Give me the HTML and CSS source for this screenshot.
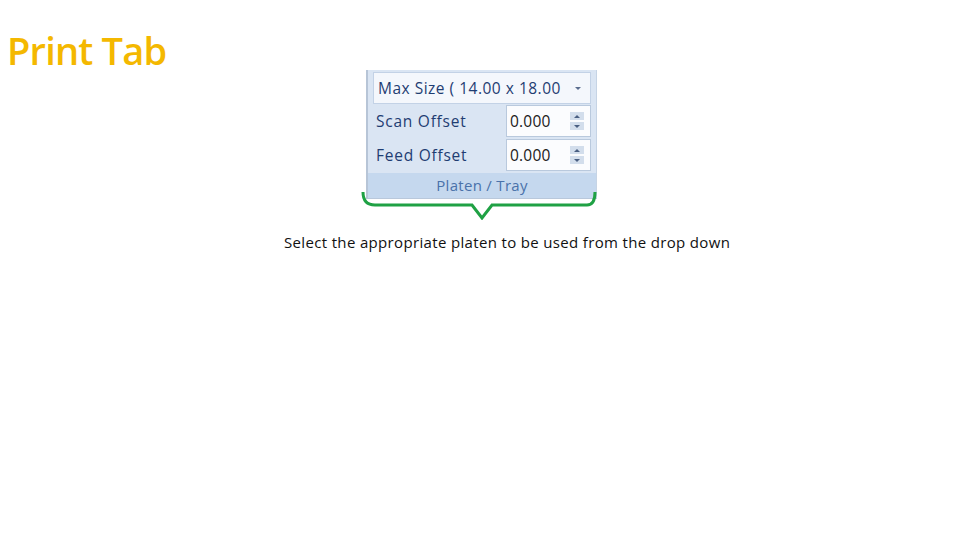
FILE: index.html
```html
<!DOCTYPE html>
<html>
<head>
<meta charset="utf-8">
<link rel="stylesheet" href="styles.css">
</head>
<body>
<div class="page">
  <h1 class="title">Print Tab</h1>
  <div class="figure">
    <div class="panel">
      <div class="combo">
        <span class="combo-text">Max Size ( 14.00 x 18.00</span>
        <span class="combo-arrow"></span>
      </div>
      <div class="row">
        <span class="label">Scan Offset</span>
        <div class="field">
          <span class="value">0.000</span>
          <div class="spin">
            <span class="spin-btn"><span class="tri-up"></span></span>
            <span class="spin-btn"><span class="tri-down"></span></span>
          </div>
        </div>
      </div>
      <div class="row">
        <span class="label">Feed Offset</span>
        <div class="field">
          <span class="value">0.000</span>
          <div class="spin">
            <span class="spin-btn"><span class="tri-up"></span></span>
            <span class="spin-btn"><span class="tri-down"></span></span>
          </div>
        </div>
      </div>
      <div class="footer">Platen / Tray</div>
    </div>
    <svg class="brace" width="240" height="30" viewBox="0 0 240 30">
      <path d="M2 2 Q2 15 14 15 L111 15 L121 28 L131 15 L226 15 Q234 15 234 2" fill="none" stroke="#1fa144" stroke-width="3"/>
    </svg>
  </div>
  <p class="caption">Select the appropriate platen to be used from the drop down</p>
</div>
</body>
</html>
```

FILE: styles.css
```css
html, body {
  margin: 0;
  padding: 0;
  background: #ffffff;
}
.page {
  width: 960px;
  height: 540px;
  overflow: hidden;
}
.title {
  margin: 0;
  padding: 30px 0 0 7px;
  height: 40px;
  font-family: "Open Sans", sans-serif;
  font-weight: 600;
  font-size: 38px;
  line-height: 40px;
  color: #f4b800;
  letter-spacing: -0.8px;
}
.figure {
  margin: 0 0 0 361px;
  width: 240px;
}
.panel {
  margin-left: 5px;
  width: 228px;
  background: #dae5f3;
  border-left: 2px solid #b7c5d7;
  border-right: 1px solid #c6d4e5;
  border-bottom: 1px solid #b9c8db;
  display: flex;
  flex-direction: column;
  font-family: "Open Sans", sans-serif;
}
.combo {
  margin: 2px 5px 0 5px;
  height: 30px;
  background: #f4f7fc;
  border: 1px solid #c3d2e6;
  display: flex;
  align-items: center;
  justify-content: space-between;
  padding: 0 9px 0 4px;
}
.combo-text {
  font-size: 15.5px;
  color: #1f3d72;
  letter-spacing: 0.5px;
}
.combo-arrow {
  width: 0;
  height: 0;
  border-left: 3px solid transparent;
  border-right: 3px solid transparent;
  border-top: 3px solid #5a6d8e;
}
.row {
  height: 34px;
  display: flex;
  align-items: center;
  justify-content: space-between;
  padding: 0 5px 0 8px;
}
.label {
  font-size: 15.5px;
  color: #1f3d72;
  letter-spacing: 0.75px;
}
.field {
  width: 74px;
  height: 30px;
  background: #fbfcfe;
  border: 1px solid #b9c9dd;
  display: flex;
  align-items: center;
  justify-content: space-between;
  padding: 0 6px 0 3px;
  box-sizing: content-box;
}
.value {
  font-size: 15.5px;
  color: #1a1a1a;
  letter-spacing: 0.2px;
}
.spin {
  display: flex;
  flex-direction: column;
  gap: 2px;
}
.spin-btn {
  width: 14px;
  height: 8px;
  background: #d3deec;
  display: flex;
  align-items: center;
  justify-content: center;
}
.tri-up {
  width: 0;
  height: 0;
  border-left: 3px solid transparent;
  border-right: 3px solid transparent;
  border-bottom: 3px solid #4a5f82;
}
.tri-down {
  width: 0;
  height: 0;
  border-left: 3px solid transparent;
  border-right: 3px solid transparent;
  border-top: 3px solid #4a5f82;
}
.footer {
  margin-top: 1px;
  height: 25px;
  background: #c5d8ee;
  text-align: center;
  font-size: 15px;
  line-height: 25px;
  color: #4a72aa;
  letter-spacing: 0.3px;
}
.brace {
  display: block;
  margin-top: -9px;
}
.caption {
  margin: 12px 0 0 284px;
  font-family: "Open Sans", sans-serif;
  font-size: 15px;
  line-height: 20px;
  color: #111111;
  letter-spacing: 0.34px;
}
```
